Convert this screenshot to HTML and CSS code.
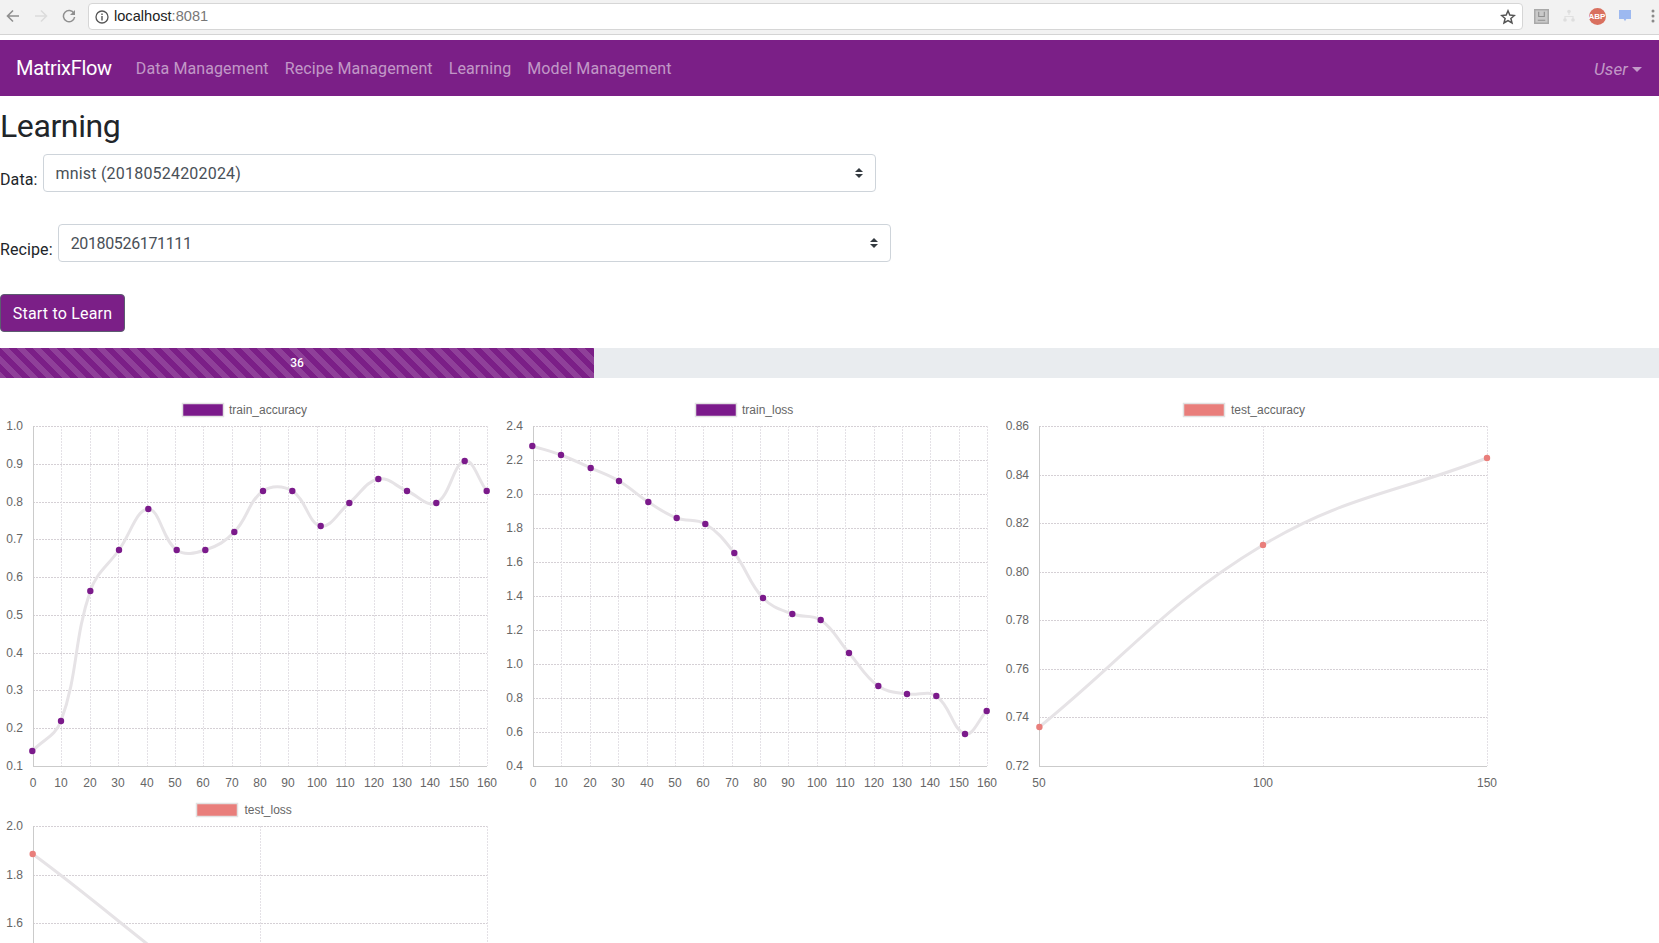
FILE: index.html
```html
<!DOCTYPE html>
<html lang="en">
<head>
<meta charset="utf-8">
<title>MatrixFlow</title>
<link rel="stylesheet" href="styles.css">
</head>
<body>
<header class="browser">
  <div class="browser-nav">
    <svg class="tool" width="14" height="14" viewBox="0 0 14 14"><path d="M13 7H2M7 1.5 1.5 7 7 12.5" fill="none" stroke="#8f8f8f" stroke-width="1.6"/></svg>
    <svg class="tool" width="14" height="14" viewBox="0 0 14 14"><path d="M1 7h11M7 1.5 12.500 7 7 12.500" fill="none" stroke="#dcdcdc" stroke-width="1.600"/></svg>
    <svg class="tool" width="14" height="14" viewBox="0 0 14 14"><path d="M12 4.500A5.600 5.600 0 1 0 12.600 8" fill="none" stroke="#8f8f8f" stroke-width="1.500"/><path d="M13 1v5H8z" fill="#8f8f8f"/></svg>
  </div>
  <div class="address">
    <svg width="14" height="14" viewBox="0 0 14 14"><circle cx="7" cy="7" r="6" fill="none" stroke="#555" stroke-width="1.300"/><path d="M7 6v4.500M7 3.500v1.400" stroke="#555" stroke-width="1.400"/></svg>
    <span class="host">localhost<span class="port">:8081</span></span>
    <svg class="star" width="16" height="16" viewBox="0 0 16 16"><path d="m8 1.800 1.800 4.300 4.600.4-3.500 3 1.100 4.500L8 11.600 4 14l1.100-4.500-3.500-3 4.600-.4z" fill="none" stroke="#555" stroke-width="1.500"/></svg>
  </div>
  <div class="extensions">
    <svg width="15" height="15" viewBox="0 0 16 16"><rect x=".8" y=".8" width="14.400" height="14.400" fill="#c9c9c9" stroke="#a9a9a9" stroke-width="1.600"/><path d="M5 3v5h6V3M4 12h8" fill="none" stroke="#8f8f8f" stroke-width="1.200"/></svg>
    <svg width="14" height="14" viewBox="0 0 14 14"><path d="M7 3v3M3 11V7.500h8V11" fill="none" stroke="#e0e0e0" stroke-width="1.200"/><circle cx="7" cy="2.500" r="1.800" fill="#dedede"/><circle cx="3" cy="11" r="1.800" fill="#dedede"/><circle cx="11" cy="11" r="1.800" fill="#dedede"/></svg>
    <span class="abp">ABP</span>
    <svg width="14" height="12" viewBox="0 0 16 14"><path d="M1 0h14v10.500H9.500L8 13l-1.500-2.500H1z" fill="#9db9f0"/></svg>
    <svg width="4" height="14" viewBox="0 0 4 14"><circle cx="2" cy="2" r="1.500" fill="#8a8a8a"/><circle cx="2" cy="7" r="1.500" fill="#8a8a8a"/><circle cx="2" cy="12" r="1.500" fill="#8a8a8a"/></svg>
  </div>
</header>

<nav class="navbar">
  <a class="brand" href="#">MatrixFlow</a>
  <a class="nav-link" href="#">Data Management</a>
  <a class="nav-link" href="#">Recipe Management</a>
  <a class="nav-link" href="#">Learning</a>
  <a class="nav-link" href="#">Model Management</a>
  <a class="nav-link user" href="#">User<span class="caret"></span></a>
</nav>

<main class="content">
  <h2 class="title">Learning</h2>
  <div class="field">
    <label class="field-label" for="data">Data:</label>
    <div class="select-wrap">
      <select class="select select-data" id="data"><option>mnist (20180524202024)</option></select>
      <svg class="select-arrows" width="8" height="10" viewBox="0 0 8 10"><path d="M4 0 8 4H0zM4 10 0 6h8z" fill="#343a40"/></svg>
    </div>
  </div>
  <div class="field">
    <label class="field-label" for="recipe">Recipe:</label>
    <div class="select-wrap">
      <select class="select select-recipe" id="recipe"><option>20180526171111</option></select>
      <svg class="select-arrows" width="8" height="10" viewBox="0 0 8 10"><path d="M4 0 8 4H0zM4 10 0 6h8z" fill="#343a40"/></svg>
    </div>
  </div>
  <button class="start" type="button">Start to Learn</button>
  <div class="progress"><div class="progress-bar" style="width:35.8%">36</div></div>
  <section class="charts" id="charts"></section>
</main>
<script src="charts.js"></script>
</body>
</html>
```

FILE: styles.css
```css
* { box-sizing: border-box; }
html, body { margin: 0; height: 100%; overflow: hidden; background: #fff; }
body { font-family: Roboto, "Liberation Sans", sans-serif; font-size: 16px; line-height: 24px; color: #212529; }

.browser { height: 35px; display: flex; align-items: flex-start; background: #f2f2f2; border-bottom: 1px solid #d4d4d4; }
.browser-nav { width: 88px; height: 32px; flex: none; display: flex; align-items: center; gap: 14px; padding-left: 6px; }
.address { flex: 1; height: 27px; margin-top: 3px; display: flex; align-items: center; padding: 0 6px 0 6px; background: #fff; border: 1px solid #d6d6d6; border-radius: 4px; }
.host { margin-left: 5px; font: 14.6px/1 "Liberation Sans", sans-serif; color: #222; }
.port { color: #777; }
.star { margin-left: auto; }
.extensions { width: 136px; height: 32px; flex: none; display: grid; grid-template-columns: repeat(5, 28px); justify-items: center; align-items: center; padding-left: 4px; }
.abp { width: 17px; height: 17px; border-radius: 50%; background: #d9705f; color: #fff; font: bold 8px/17px "Liberation Sans", sans-serif; text-align: center; }

.navbar { height: 56px; margin-top: 5px; display: flex; align-items: center; padding: 0 16px; background: #7b1f87; }
.navbar a { text-decoration: none; }
.brand { margin-right: 16px; font-size: 20px; letter-spacing: -.3px; color: #fff; }
.nav-link { padding: 9px 8px 7px; letter-spacing: .1px; color: rgba(255, 255, 255, .55); }
.user { margin-left: auto; padding-right: 1px; font-size: 17px; font-style: italic; }
.caret { display: inline-block; margin-left: 4px; vertical-align: 3px; border-top: 5px solid rgba(255, 255, 255, .55); border-left: 5px solid transparent; border-right: 5px solid transparent; }

.content { display: flex; flex-direction: column; align-items: flex-start; height: calc(100% - 96px); overflow: hidden; }
.title { margin: 11px 0 9px; font-size: 32px; font-weight: 400; letter-spacing: -.4px; line-height: 38px; }
.field { display: flex; align-items: flex-end; gap: 5px; margin-bottom: 32px; flex: none; }
.field-label { letter-spacing: .1px; }
.select-wrap { position: relative; width: 833px; }
.select { display: block; width: 100%; height: 38px; padding: 7px 28px 5px 12px; appearance: none; font: inherit; color: #495057; background: #fff; border: 1px solid #ced4da; border-radius: 4px; }
.select-data { letter-spacing: .2px; }
.select-recipe { letter-spacing: -.35px; }
.select-arrows { position: absolute; top: 14px; right: 13px; }
.start { height: 38px; width: 125px; flex: none; margin-bottom: 16px; padding: 2px 0 0; font: inherit; letter-spacing: .2px; color: #fff; background: #7b1f87; border: 1px solid #5c5c70; border-radius: 4px; }
.progress { width: 100%; height: 30px; flex: none; margin-bottom: 18px; background: #e9ecef; }
.progress-bar { height: 100%; font-size: 12px; font-weight: 500; line-height: 30px; text-align: center; color: #fff; background-color: #7b1f87; background-image: linear-gradient(45deg, rgba(255,255,255,.15) 25%, transparent 25%, transparent 50%, rgba(255,255,255,.15) 50%, rgba(255,255,255,.15) 75%, transparent 75%, transparent); background-size: 16px 16px; }

.charts { width: 1500px; flex: none; display: flex; flex-wrap: wrap; }
.chart { display: block; width: 500px; height: 400px; font: 12px "Liberation Sans", sans-serif; fill: #666; }
.grid-h { stroke: #d5d0d5; stroke-dasharray: 2 1; fill: none; }
.grid-v { stroke: #e4e1e6; stroke-dasharray: 2 1; fill: none; }
.axis { stroke: #cbcbcb; fill: none; }
.curve { stroke: #e6e3e6; stroke-width: 3; fill: none; }
.legend-box { stroke: #e2e2e2; stroke-width: 1.5; }
.purple { fill: #7b1a8b; }
.salmon { fill: #e97e7b; }
```

FILE: charts.js
```js
var purple = 'purple', salmon = 'salmon';
var charts = [
  { name: 'train_accuracy', color: purple, left: 33, legendX: 183,
    xTicks: [0,10,20,30,40,50,60,70,80,90,100,110,120,130,140,150,160],
    yTicks: ['1.0','0.9','0.8','0.7','0.6','0.5','0.4','0.3','0.2','0.1'],
    points: [[32.3,355],[61,325],[90.300,195],[119,154],[148.300,113],[176.700,154],[205.300,154],[234.300,136],[263,95],[292.300,95],[320.700,130],[349.300,107],[378.300,83],[407,95],[436.300,107],[464.700,65],[486.700,95]] },
  { name: 'train_loss', color: purple, left: 33, legendX: 196,
    xTicks: [0,10,20,30,40,50,60,70,80,90,100,110,120,130,140,150,160],
    yTicks: ['2.4','2.2','2.0','1.8','1.6','1.4','1.2','1.0','0.8','0.6','0.4'],
    points: [[32.300,50],[61,59],[90.700,72],[119,85],[148.300,106],[176.700,122],[205.300,128],[234.300,157],[263,202],[292.300,218],[320.700,224],[349,257],[378.300,290],[407,298],[436.300,300],[465,338],[486.700,315]] },
  { name: 'test_accuracy', color: salmon, left: 39, legendX: 184, legendGap: 47,
    xTicks: [50,100,150],
    yTicks: ['0.86','0.84','0.82','0.80','0.78','0.76','0.74','0.72'],
    points: [[39.400,331],[263,149],[487,62]] },
  // Only the top of this chart is on screen, so only those ticks are labelled.
  { name: 'test_loss', color: salmon, left: 33, legendX: 197, legendGap: 47.5,
    xTicks: ['','',''],
    yTicks: ['2.0','1.8','1.6','','','','',''],
    points: [[32.700,58],[260,225],[487,320]] }
];

var NS = 'http://www.w3.org/2000/svg';
function el(parent, tag, attrs, text) {
  var node = document.createElementNS(NS, tag);
  for (var key in attrs) node.setAttribute(key, attrs[key]);
  if (text !== undefined) node.textContent = text;
  parent.appendChild(node);
  return node;
}

// Same spline as Chart.js with lineTension 0.4.
function smooth(points) {
  var t = 0.4, d = 'M' + points[0].join(' ');
  function controls(i) {
    var prev = points[i - 1] || points[i], cur = points[i], next = points[i + 1] || points[i];
    var d01 = Math.hypot(cur[0] - prev[0], cur[1] - prev[1]);
    var d12 = Math.hypot(next[0] - cur[0], next[1] - cur[1]);
    var s = d01 + d12 || 1, fa = t * d01 / s, fb = t * d12 / s;
    return {
      before: [cur[0] - fa * (next[0] - prev[0]), cur[1] - fa * (next[1] - prev[1])],
      after: [cur[0] + fb * (next[0] - prev[0]), cur[1] + fb * (next[1] - prev[1])]
    };
  }
  for (var i = 1; i < points.length; i++) {
    d += 'C' + controls(i - 1).after.join(' ') + ' ' + controls(i).before.join(' ') + ' ' + points[i].join(' ');
  }
  return d;
}

var RIGHT = 487, TOP = 30, BOTTOM = 370;
charts.forEach(function (c) {
  var svg = el(document.getElementById('charts'), 'svg', { 'class': 'chart', viewBox: '0 0 500 400' });
  el(svg, 'rect', { 'class': 'legend-box ' + c.color, x: c.legendX - 0.5, y: 7.5, width: 41, height: 13 });
  el(svg, 'text', { x: c.legendX + (c.legendGap || 46), y: 18 }, c.name);

  c.yTicks.forEach(function (label, i) {
    var y = Math.round(TOP + i * (BOTTOM - TOP) / (c.yTicks.length - 1)) + 0.5;
    el(svg, 'line', { 'class': i === c.yTicks.length - 1 ? 'axis' : 'grid-h', x1: c.left, x2: RIGHT, y1: y, y2: y });
    if (label !== '') el(svg, 'text', { x: c.left - 10, y: y + 3, 'text-anchor': 'end' }, label);
  });
  c.xTicks.forEach(function (label, i) {
    var x = Math.round(c.left + i * (RIGHT - c.left) / (c.xTicks.length - 1)) + 0.5;
    el(svg, 'line', { 'class': i === 0 ? 'axis' : 'grid-v', x1: x, x2: x, y1: TOP, y2: BOTTOM });
    if (label !== '') el(svg, 'text', { x: x - 0.5, y: 391, 'text-anchor': 'middle' }, label);
  });

  el(svg, 'path', { 'class': 'curve', d: smooth(c.points) });
  c.points.forEach(function (p) {
    el(svg, 'circle', { 'class': c.color, cx: p[0], cy: p[1], r: 3.2 });
  });
});
```
